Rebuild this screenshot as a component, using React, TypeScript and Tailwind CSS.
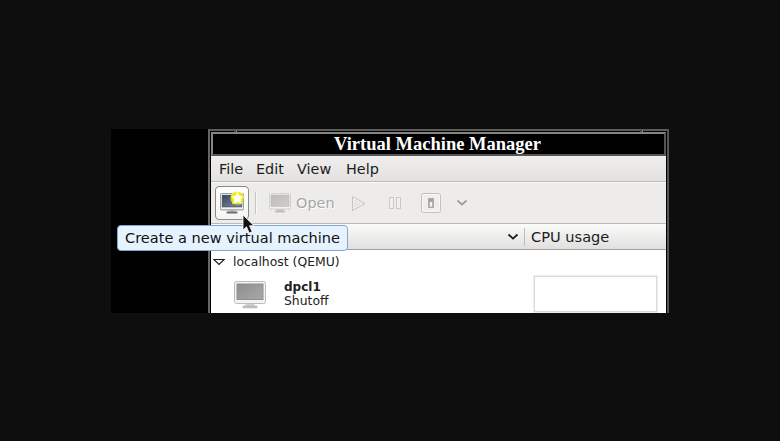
import React from "react";

function Monitor({ className, screenFrom, screenTo, edge, inner, base }: { className: string; screenFrom: string; screenTo: string; edge: string; inner: string; base: string }) {
  const id = "s" + screenFrom.slice(1);
  return (
    <svg viewBox="0 0 32 28" preserveAspectRatio="none" className={className}>
      <defs>
        <linearGradient id={id} x1="0" y1="0" x2="1" y2="1">
          <stop offset="0" stopColor={screenFrom} />
          <stop offset="1" stopColor={screenTo} />
        </linearGradient>
      </defs>
      <rect x="11.5" y="22" width="9" height="3.5" fill="#d0d0ce" />
      <rect x="8.5" y="24.6" width="15" height="2.6" rx="1.3" fill={base} />
      <rect x="0.5" y="0.5" width="31" height="22" rx="1.8" fill="#f3f3f1" stroke={edge} />
      <rect x="3" y="3" width="26" height="15.5" fill={`url(#${id})`} stroke={inner} strokeWidth="1" />
    </svg>
  );
}

function MenuBar() {
  return (
    <nav className="flex h-[26px] shrink-0 items-center border-b border-[#bdbbb8] bg-linear-to-b from-[#efeeed] to-[#e3e2e0] pt-[2px] pl-[8px] text-[14.4px] text-[#1c1c1c]">
      <span className="w-[37px]">File</span>
      <span className="w-[41px]">Edit</span>
      <span className="w-[49px]">View</span>
      <span>Help</span>
    </nav>
  );
}

function Toolbar() {
  return (
    <div className="flex h-[42px] shrink-0 items-center border-t border-b border-t-[#fafafa] border-b-[#bcbab8] bg-[#edeceb] pl-1">
      <button className="relative h-[34px] w-[34px] shrink-0 rounded-[4px] border border-[#8d8b88] bg-linear-to-b from-white to-[#f5f5f4]">
        <Monitor className="absolute top-[6px] left-[4px] h-[21px] w-[24px]" screenFrom="#35445c" screenTo="#7f91aa" edge="#6f7375" inner="#3d464f" base="#6c6f70" />
        <svg viewBox="0 0 16 16" className="absolute top-[3px] left-[13px] h-[16px] w-[16px]">
          <circle cx="8" cy="8" r="6.6" fill="#f0ee12" opacity=".85" />
          <rect x="3" y="3" width="11" height="11" fill="#f0ee12" opacity=".7" />
          <path d="M8.5 2l1.9 3.8 4.4.6-3.2 3 .8 4.3-3.9-2-3.9 2 .8-4.3-3.2-3 4.4-.6z" fill="#fff" stroke="#f8f660" strokeWidth=".5" />
        </svg>
      </button>
      <div className="ml-[6px] h-[22px] w-[2px] border-r border-l border-l-[#c6c4c1] border-r-[#f8f8f7]" />
      <Monitor className="ml-[12px] h-[20px] w-[22px]" screenFrom="#bdbcbb" screenTo="#cfcecd" edge="#bcbbb9" inner="#b5b4b2" base="#bcbbb9" />
      <span className="ml-[5px] w-[55px] pt-[2px] text-[14.5px] text-[#a9a8a6] [text-shadow:1px_1px_0_#fff]">Open</span>
      <svg viewBox="0 0 110 22" className="h-[22px] w-[110px] shrink-0" fill="none">
        <path d="M1.5 4.5v14l12.5-7z" fill="#e6e5e4" stroke="#c4c3c1" />
        <path d="M2.5 6.2v10.6l9.3-5.3z" stroke="#f7f7f6" strokeWidth=".7" />
        <rect x="38.5" y="5.5" width="4" height="11" fill="#f1f0ef" stroke="#c9c8c6" />
        <rect x="45.5" y="5.5" width="4" height="11" fill="#f1f0ef" stroke="#c9c8c6" />
        <rect x="70.5" y="1.5" width="19" height="19" rx="2" fill="#efeeed" stroke="#c2c1bf" />
        <rect x="71.5" y="2.5" width="17" height="17" rx="1" stroke="#f7f7f6" />
        <rect x="77.5" y="6.5" width="5" height="9" fill="#b4b3b1" stroke="#adacaa" />
        <rect x="79" y="8" width="2" height="6.5" fill="#f4f4f3" />
        <rect x="78" y="7" width="4" height="3" fill="#a5a4a2" />
      </svg>
      <svg viewBox="0 0 12 8" className="-ml-[5px] h-[8px] w-[12px] shrink-0" fill="none">
        <path d="M1.5 1.5L6 5.6l4.5-4.1" stroke="#9c9b99" strokeWidth="1.8" />
      </svg>
    </div>
  );
}

function ColumnHeader() {
  return (
    <div className="flex h-[26px] shrink-0 items-center border-b border-[#a5a3a0] bg-linear-to-b from-[#fbfbfa] to-[#e1e0de]">
      <svg viewBox="0 0 12 8" className="ml-[296px] h-[8px] w-[12px]" fill="none">
        <path d="M1.5 1.5L6 5.6l4.5-4.1" stroke="#191919" strokeWidth="1.8" />
      </svg>
      <div className="ml-[5px] h-[18px] w-px bg-[#bebcb9]" />
      <span className="ml-[6px] text-[14.6px] text-[#1c1c1c]">CPU usage</span>
    </div>
  );
}

function MachineList() {
  return (
    <div className="flex grow flex-col bg-white text-[12.4px] text-[#222]">
      <div className="flex h-[24px] shrink-0 items-center">
        <svg viewBox="0 0 12 8" className="ml-[2px] h-[8px] w-[12px]">
          <path d="M.9 1.5h10.2L6 6.5z" fill="#fff" stroke="#1b1b1b" strokeWidth="1.1" />
        </svg>
        <span className="ml-[8px]">localhost (QEMU)</span>
      </div>
      <div className="flex h-[39px] items-start">
        <Monitor className="mt-[7px] ml-[23px] h-[28px] w-[32px] shrink-0" screenFrom="#8e8e8e" screenTo="#a9a9a9" edge="#bcbcbc" inner="#8f8f8f" base="#bcbcbc" />
        <div className="ml-[18px] flex w-[249px] flex-col pt-[6px] leading-[14px]">
          <b className="text-[12px]">dpcl1</b>
          <span>Shutoff</span>
        </div>
        <div className="mt-[1px] h-[38px] w-[125px] border border-[#f0edee]">
          <div className="h-full border border-[#dedadb]" />
        </div>
      </div>
    </div>
  );
}

export default function App() {
  return (
    <main className="h-[441px] w-[780px] overflow-hidden bg-[#0e0e0e] pt-[129px] pl-[111px] font-['DejaVu_Sans',sans-serif] whitespace-nowrap">
      <div className="relative flex h-[184px] w-[558px] bg-black pl-[97px]">
        <section className="flex w-[461px] flex-col border-t-2 border-r-2 border-l-2 border-t-[#5c5c5a] border-r-[#555] border-l-[#666664] bg-black">
          <header className="mt-px ml-px flex h-[24px] w-[455px] shrink-0 items-center justify-center border-2 border-t-[#858583] border-r-[#555] border-b-[#555] border-l-[#858583] bg-black pt-[2px] pr-[2px] font-['Liberation_Serif',serif] text-[18.5px] font-bold text-white">
            Virtual Machine Manager
          </header>
          <div className="ml-px flex w-[455px] grow flex-col">
            <MenuBar />
            <Toolbar />
            <ColumnHeader />
            <MachineList />
          </div>
        </section>
        <div className="absolute top-[1px] left-[123px] h-[2px] w-[3px] border-r border-[#858583] bg-[#444]" />
        <div className="absolute top-[1px] left-[529px] h-[2px] w-[3px] border-r border-[#858583] bg-[#444]" />
        <div className="absolute top-[96px] left-[6px] flex h-[26px] w-[231px] items-center rounded-[4px] border border-[#80a5d8] bg-[#e6f3ff] pl-[7px] text-[14.55px] text-[#111]">
          Create a new virtual machine
        </div>
        <svg viewBox="0 0 13 20" className="absolute top-[85px] left-[131px] h-[20px] w-[13px]">
          <path d="M1 1v15l3.5-3.2 2.7 6.2 3-1.3-2.7-6H12z" fill="#111" stroke="#fff" strokeWidth=".8" />
        </svg>
      </div>
    </main>
  );
}
